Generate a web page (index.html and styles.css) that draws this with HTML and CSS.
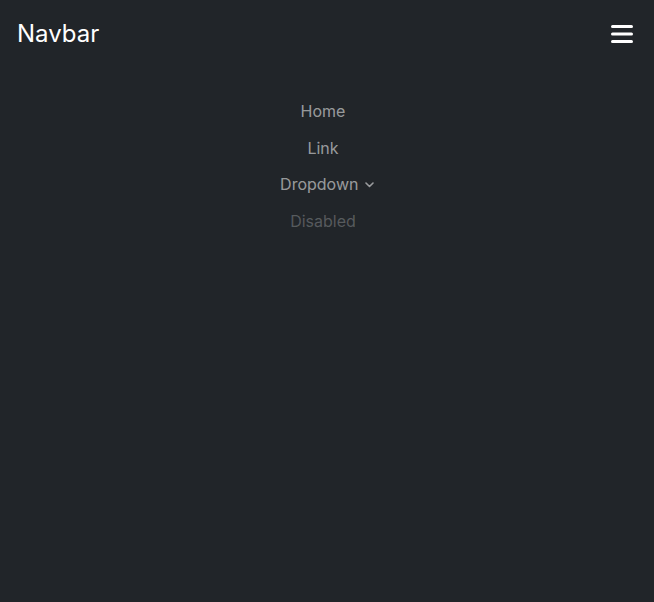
FILE: index.html
```html
<!DOCTYPE html>
<html>
<head>
<meta charset="utf-8">
<link rel="stylesheet" href="styles.css">
</head>
<body>
<nav class="navbar">
  <div class="bar">
    <span class="brand">Navbar</span>
    <button class="toggler" aria-label="Toggle navigation">
      <svg width="22" height="19" viewBox="0 0 22 19"><g stroke="#fff" stroke-width="3" stroke-linecap="round"><line x1="1.5" y1="1.5" x2="20.5" y2="1.5"/><line x1="1.5" y1="9" x2="20.5" y2="9"/><line x1="1.5" y1="16.5" x2="20.5" y2="16.5"/></g></svg>
    </button>
  </div>
  <ul class="nav">
    <li><a class="link">Home</a></li>
    <li><a class="link">Link</a></li>
    <li><a class="link">Dropdown <svg class="chev" width="9" height="6" viewBox="0 0 9 6"><path d="M1 1l3.5 3.5L8 1" fill="none" stroke="currentColor" stroke-width="1.6" stroke-linecap="round" stroke-linejoin="round"/></svg></a></li>
    <li><a class="link disabled">Disabled</a></li>
  </ul>
</nav>
</body>
</html>
```
FILE: styles.css
```css
html, body {
  margin: 0;
  height: 100%;
  background: #212529;
  font-family: Inter, "Noto Sans", sans-serif;
}
.navbar {
  padding: 0 21px 0 17px;
}
.bar {
  display: flex;
  justify-content: space-between;
  align-items: center;
  height: 70px;
}
.brand {
  color: #fff;
  font-size: 24px;
  line-height: 30px;
  margin-top: -2px;
}
.toggler {
  background: none;
  border: 0;
  padding: 0;
  display: flex;
  margin-top: -1px;
}
.nav {
  list-style: none;
  margin: 23px 0 0;
  padding: 0 4px 0 0;
  display: flex;
  flex-direction: column;
  align-items: center;
}
.link {
  display: block;
  color: rgba(255,255,255,.55);
  font-size: 16px;
  line-height: 24px;
  padding: 6.25px 0;
}
.link.disabled {
  color: rgba(255,255,255,.25);
}
.chev {
  vertical-align: 2px;
  margin-left: 2px;
  margin-right: -8px;
}
```
